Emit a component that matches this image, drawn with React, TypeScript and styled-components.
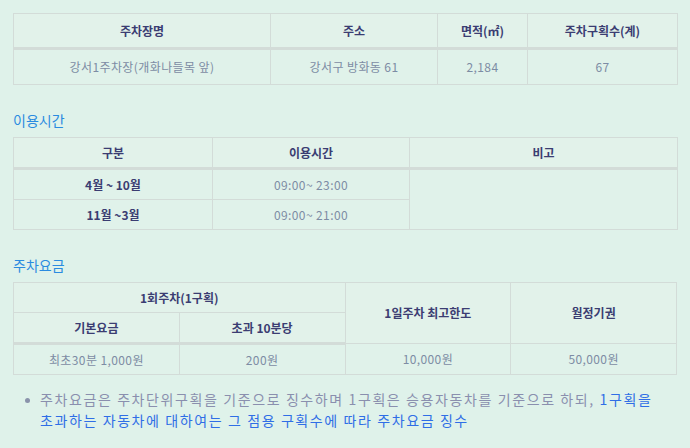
import React from 'react';
import styled, { createGlobalStyle } from 'styled-components';

const GlobalStyle = createGlobalStyle`
  html, body {
    margin: 0;
    padding: 0;
    background: #dff2ea;
  }
  body {
    font-family: 'Noto Sans CJK KR', 'Noto Sans', sans-serif;
  }
`;

const Page = styled.div`
  padding: 13px 13px 0 13px;
  width: 664px;
`;

const Table = styled.table`
  width: 100%;
  border-collapse: collapse;
  table-layout: fixed;
  font-size: 12px;
  background: #e0f2ea;

  th,
  td {
    border: 1px solid #d3dcd8;
    text-align: center;
    padding: 0;
    line-height: 1;
  }

  thead tr:last-child th,
  thead tr:last-child td {
    border-bottom: 3px solid #d3dcd8;
  }
`;

const Th = styled.th<{ $h?: number }>`
  height: ${p => p.$h ?? 29}px;
  font-weight: 700;
  color: #3b3d72;
  background: #e2f2ea;
`;

const Td = styled.td<{ $h?: number; $bold?: boolean }>`
  height: ${p => p.$h ?? 29}px;
  font-weight: ${p => (p.$bold ? 700 : 400)};
  color: ${p => (p.$bold ? '#3b3d72' : '#7d8ca4')};
  letter-spacing: ${p => (p.$bold ? 0 : 0.4)}px;
`;

const Title = styled.h3`
  margin: 0;
  font-size: 14px;
  font-weight: 400;
  color: #2a8be0;
  line-height: 20px;
`;

const Section = styled.section`
  margin-top: 25px;
  display: flex;
  flex-direction: column;
  gap: 7px;
`;

const NoteList = styled.ul`
  list-style: none;
  margin: 14px 0 0 0;
  padding: 0 0 0 27px;
`;

const NoteItem = styled.li`
  position: relative;
  font-size: 14px;
  line-height: 21px;
  letter-spacing: 1.6px;
  color: #8a8fae;
  white-space: nowrap;

  &::before {
    content: '';
    position: absolute;
    left: -15px;
    top: 9px;
    width: 5px;
    height: 5px;
    border-radius: 50%;
    background: #8a93ab;
  }
`;

const Highlight = styled.span`
  color: #2f6ee6;
`;

export default function App() {
  return (
    <>
      <GlobalStyle />
      <Page>
        <Table>
          <colgroup>
            <col style={{ width: 257 }} />
            <col style={{ width: 167 }} />
            <col style={{ width: 90 }} />
            <col style={{ width: 150 }} />
          </colgroup>
          <thead>
            <tr>
              <Th $h={33}>주차장명</Th>
              <Th $h={33}>주소</Th>
              <Th $h={33}>면적(㎡)</Th>
              <Th $h={33}>주차구획수(계)</Th>
            </tr>
          </thead>
          <tbody>
            <tr>
              <Td $h={34}>강서1주차장(개화나들목 앞)</Td>
              <Td $h={34}>강서구 방화동 61</Td>
              <Td $h={34}>2,184</Td>
              <Td $h={34}>67</Td>
            </tr>
          </tbody>
        </Table>

        <Section>
          <Title>이용시간</Title>
          <Table>
            <colgroup>
              <col style={{ width: 199 }} />
              <col style={{ width: 197 }} />
              <col style={{ width: 268 }} />
            </colgroup>
            <thead>
              <tr>
                <Th>구분</Th>
                <Th>이용시간</Th>
                <Th>비고</Th>
              </tr>
            </thead>
            <tbody>
              <tr>
                <Td $bold>4월 ~ 10월</Td>
                <Td>09:00~ 23:00</Td>
                <Td rowSpan={2} />
              </tr>
              <tr>
                <Td $bold>11월 ~3월</Td>
                <Td>09:00~ 21:00</Td>
              </tr>
            </tbody>
          </Table>
        </Section>

        <Section>
          <Title>주차요금</Title>
          <Table>
            <thead>
              <tr>
                <Th colSpan={2}>1회주차(1구획)</Th>
                <Th rowSpan={2}>1일주차 최고한도</Th>
                <Th rowSpan={2}>월정기권</Th>
              </tr>
              <tr>
                <Th>기본요금</Th>
                <Th>초과 10분당</Th>
              </tr>
            </thead>
            <tbody>
              <tr>
                <Td>최초30분 1,000원</Td>
                <Td>200원</Td>
                <Td>10,000원</Td>
                <Td>50,000원</Td>
              </tr>
            </tbody>
          </Table>
        </Section>

        <NoteList>
          <NoteItem>
            주차요금은 주차단위구획을 기준으로 징수하며 1구획은 승용자동차를 기준으로 하되,{' '}
            <Highlight>
              1구획을
              <br />
              초과하는 자동차에 대하여는 그 점용 구획수에 따라 주차요금 징수
            </Highlight>
          </NoteItem>
        </NoteList>
      </Page>
    </>
  );
}
